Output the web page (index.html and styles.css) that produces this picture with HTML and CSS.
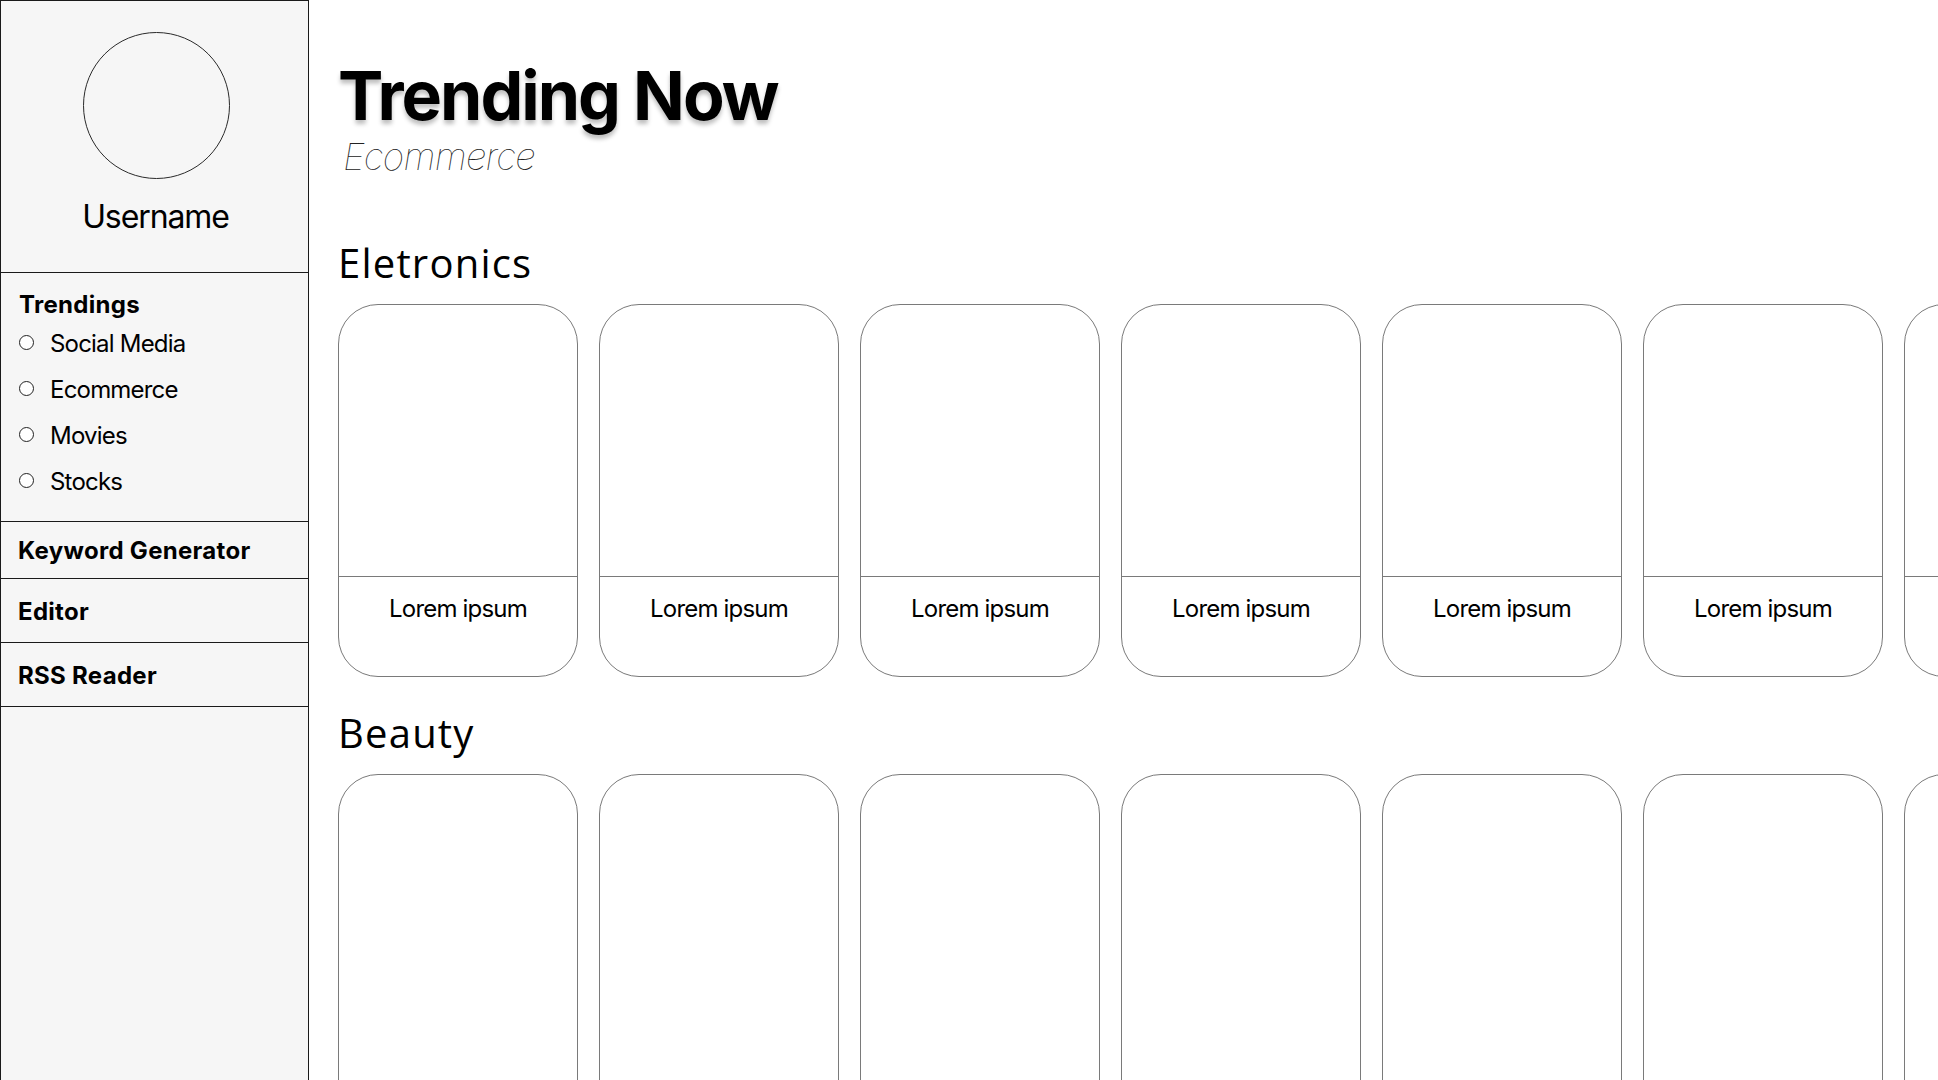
FILE: index.html
```html
<!DOCTYPE html>
<html lang="en">
<head>
<meta charset="utf-8">
<title>Trending Now</title>
<link rel="stylesheet" href="styles.css">
</head>
<body>
<div class="app">
  <aside class="sidebar">
    <div class="profile">
      <div class="avatar"></div>
      <div class="username">Username</div>
    </div>
    <div class="side-section trendings">
      <div class="side-title">Trendings</div>
      <ul class="trend-list">
        <li><span class="radio"></span>Social Media</li>
        <li><span class="radio"></span>Ecommerce</li>
        <li><span class="radio"></span>Movies</li>
        <li><span class="radio"></span>Stocks</li>
      </ul>
    </div>
    <div class="side-section link keyword">Keyword Generator</div>
    <div class="side-section link">Editor</div>
    <div class="side-section link">RSS Reader</div>
  </aside>
  <main class="main">
    <h1 class="title">Trending Now</h1>
    <div class="subtitle">Ecommerce</div>

    <section class="category">
      <h2 class="cat-title">Eletronics</h2>
      <div class="card-row">
        <div class="card"><div class="card-img"></div><div class="card-label">Lorem ipsum</div></div>
        <div class="card"><div class="card-img"></div><div class="card-label">Lorem ipsum</div></div>
        <div class="card"><div class="card-img"></div><div class="card-label">Lorem ipsum</div></div>
        <div class="card"><div class="card-img"></div><div class="card-label">Lorem ipsum</div></div>
        <div class="card"><div class="card-img"></div><div class="card-label">Lorem ipsum</div></div>
        <div class="card"><div class="card-img"></div><div class="card-label">Lorem ipsum</div></div>
        <div class="card"><div class="card-img"></div><div class="card-label"></div></div>
      </div>
    </section>

    <section class="category">
      <h2 class="cat-title">Beauty</h2>
      <div class="card-row">
        <div class="card tall"></div>
        <div class="card tall"></div>
        <div class="card tall"></div>
        <div class="card tall"></div>
        <div class="card tall"></div>
        <div class="card tall"></div>
        <div class="card tall"></div>
      </div>
    </section>
  </main>
</div>
</body>
</html>
```

FILE: styles.css
```css
* { box-sizing: border-box; }

html, body {
  margin: 0;
  padding: 0;
  background: #ffffff;
  overflow: hidden;
}

body {
  font-family: Inter, "Liberation Sans", sans-serif;
  color: #000;
}

.app {
  display: flex;
  width: 1938px;
  height: 1080px;
  overflow: hidden;
}

.sidebar {
  flex: 0 0 309px;
  width: 309px;
  min-height: 1200px;
  background: #f6f6f6;
  border: 1px solid #1a1a1a;
  border-bottom: none;
  display: flex;
  flex-direction: column;
}

.profile {
  display: flex;
  flex-direction: column;
  align-items: center;
  padding: 31px 0 36px;
  border-bottom: 1px solid #1a1a1a;
}

.avatar {
  width: 147px;
  height: 147px;
  border-radius: 50%;
  border: 1px solid #2a2a2a;
  margin-left: 4px;
}

.username {
  margin-top: 19px;
  font-size: 32px;
  line-height: 38px;
  font-weight: 400;
  letter-spacing: -1.1px;
  margin-left: 2px;
}

.side-section {
  border-bottom: 1px solid #1a1a1a;
  padding: 18px 0 16px 17px;
}

.trendings {
  padding: 17px 0 25px 18px;
}

.side-title,
.link {
  font-size: 24px;
  line-height: 29px;
  font-weight: 700;
  letter-spacing: 0.3px;
}

.keyword {
  padding-top: 14px;
  padding-bottom: 13px;
}

.trend-list {
  list-style: none;
  margin: 10px 0 0;
  padding: 0;
  display: flex;
  flex-direction: column;
  gap: 17px;
}

.trend-list li {
  display: flex;
  align-items: center;
  font-size: 24px;
  line-height: 29px;
  font-weight: 400;
  letter-spacing: -0.8px;
}

.radio {
  width: 15px;
  height: 15px;
  border: 1px solid #222;
  border-radius: 50%;
  background: #fff;
  margin-right: 16px;
  margin-top: -3px;
  flex: 0 0 15px;
}

.main {
  flex: 1 1 auto;
  padding: 58px 0 0 29px;
  overflow: hidden;
}

.title {
  margin: 0;
  font-size: 68px;
  line-height: 75px;
  font-weight: 700;
  letter-spacing: -2px;
  text-shadow: 0 4px 4px rgba(0, 0, 0, 0.25);
}

.subtitle {
  margin: 2px 0 0 5px;
  font-size: 37px;
  line-height: 44px;
  font-weight: 100;
  font-style: italic;
  color: #222;
  letter-spacing: -0.8px;
}

.category {
  margin-top: 32px;
}

.category:first-of-type {
  margin-top: 60px;
}

.cat-title {
  margin: 0 0 17px;
  font-family: "Open Sans", sans-serif;
  font-size: 40px;
  line-height: 48px;
  font-weight: 400;
  letter-spacing: 1.2px;
}

.card-row {
  display: flex;
  gap: 21px;
}

.card {
  flex: 0 0 240px;
  width: 240px;
  height: 373px;
  border: 1px solid #7a7a7a;
  border-radius: 40px;
  display: flex;
  flex-direction: column;
  overflow: hidden;
}

.card.tall {
  height: 420px;
}

.card-img {
  height: 272px;
  border-bottom: 1px solid #7a7a7a;
}

.card-label {
  padding-top: 17px;
  text-align: center;
  font-size: 24px;
  line-height: 29px;
  letter-spacing: -0.8px;
}
```
